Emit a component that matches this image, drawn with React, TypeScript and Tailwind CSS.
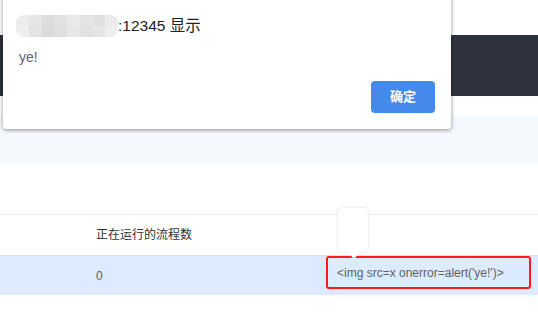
import React from "react";

const blocks = [
  ["#ececec", "#e6e6e6", "#dedede", "#e2e2e2", "#e9e9e9", "#e4e4e4", "#e0e0e0", "#eaeaea"],
  ["#efefef", "#e3e3e3", "#dadada", "#dfdfdf", "#e7e7e7", "#e1e1e1", "#e5e5e5", "#eeeeee"],
];

export default function App() {
  return (
    <div
      className="relative w-[538px] h-[314px] overflow-hidden bg-white"
      style={{ fontFamily: '"Liberation Sans", Arial, "Noto Sans CJK SC", sans-serif' }}
    >
      {/* page background */}
      <div className="h-[35px] bg-white" />
      <div className="h-[61px] bg-[#2f313c] shadow-[0_2px_3px_rgba(0,0,0,0.15)]" />
      <div className="h-[20px] bg-white" />
      <div className="h-[48px] bg-[#f5f9fd]" />
      <div className="h-[51px] bg-white border-b border-[#e8eef8]" />
      <div className="grid grid-cols-[96px_230px_1fr] h-[40px] items-center text-[12px] text-[#303133]">
        <div />
        <div>正在运行的流程数</div>
        <div />
      </div>
      <div className="grid grid-cols-[96px_230px_1fr] h-[40px] bg-[#dcebfd] border-t border-[#d3e4fa] text-[12px] text-[#606266]">
        <div />
        <div className="flex items-center">0</div>
        <div className="mr-[7px] mb-[6px] border-2 border-[#ff1a1a] rounded-[3px] flex items-center pl-[9px]">
          {"<img src=x onerror=alert('ye!')>"}
        </div>
      </div>

      {/* tooltip */}
      <div className="absolute left-[337px] top-[207px] w-[32px] h-[46px] bg-white rounded-[5px] border border-[#eef1f6] shadow-[0_0_3px_rgba(0,0,0,0.06)]">
        <div className="absolute left-[12px] bottom-[-5px] w-[8px] h-[8px] bg-white rotate-45 border-r border-b border-[#eef1f6]" />
      </div>

      {/* alert dialog */}
      <div className="absolute left-[3px] top-[-4px] w-[448px] h-[133px] bg-white rounded-[3px] shadow-[0_1px_4px_rgba(0,0,0,0.45)]">
        <div className="absolute left-[13px] top-[19px] flex items-center">
          <div className="flex flex-col rounded-[8px] overflow-hidden">
            {blocks.map((row, i) => (
              <div key={i} className="flex">
                {row.map((c, j) => (
                  <div key={j} className="w-[12.75px] h-[11px]" style={{ background: c }} />
                ))}
              </div>
            ))}
          </div>
          <span className="text-[15.5px] text-[#202124] leading-none">:12345 显示</span>
        </div>
        <div className="absolute left-[16px] top-[51px] text-[14px] text-[#5f6368]">ye!</div>
        <button className="absolute left-[368px] top-[85px] w-[64px] h-[32px] rounded-[4px] bg-[#438aea] text-white text-[13px] font-semibold flex items-center justify-center">
          确定
        </button>
      </div>
    </div>
  );
}
